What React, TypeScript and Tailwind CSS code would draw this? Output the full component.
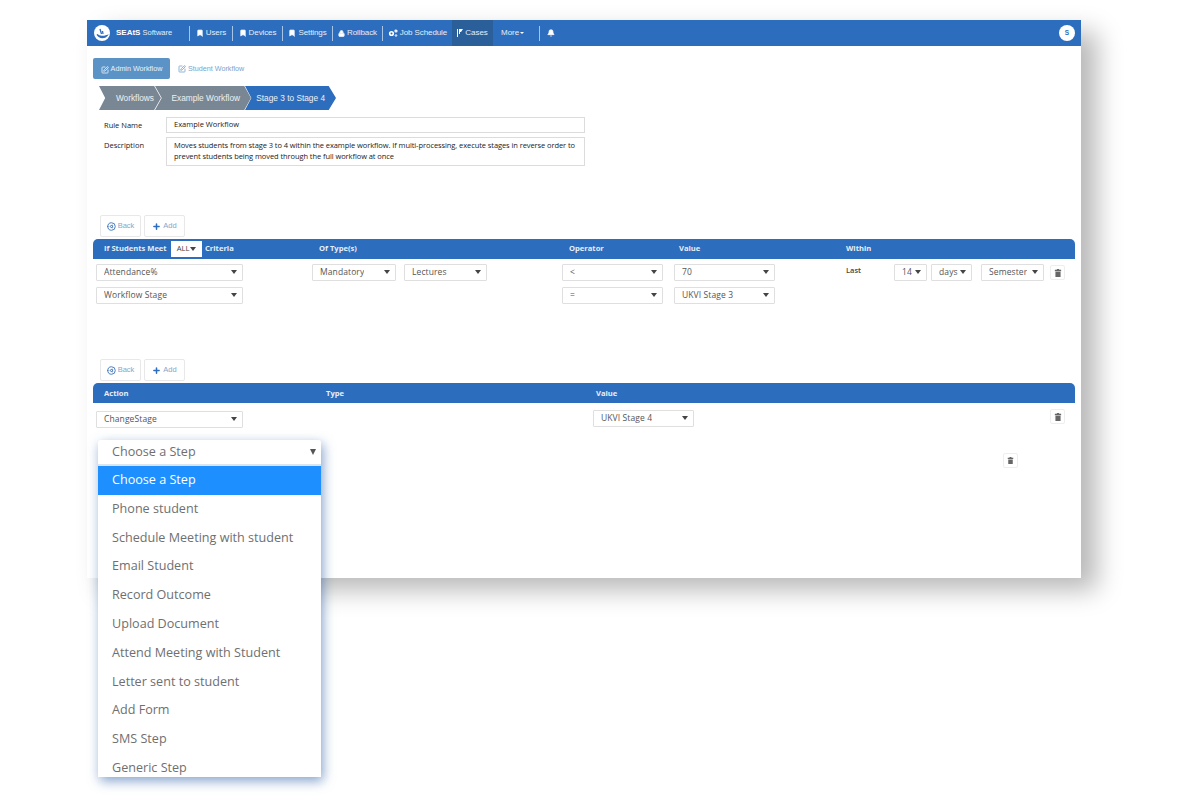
import { Bell, Bookmark, CirclePlay, Lock, Plus, SquarePen } from "lucide-react";

const navItems = [
  { label: "Users", icon: "book", w: "w-[43px]" },
  { label: "Devices", icon: "book", w: "w-[50px]" },
  { label: "Settings", icon: "book", w: "w-[50px]" },
  { label: "Rollback", icon: "lock", w: "w-[50px]" },
  { label: "Job Schedule", icon: "cog", w: "w-[70px]" },
];

const steps = [
  "Choose a Step",
  "Phone student",
  "Schedule Meeting with student",
  "Email Student",
  "Record Outcome",
  "Upload Document",
  "Attend Meeting with Student",
  "Letter sent to student",
  "Add Form",
  "SMS Step",
  "Generic Step",
];

const NavIcon = ({ name }: { name: string }) => {
  if (name === "lock") return <Lock size={7} fill="white" strokeWidth={3} className="shrink-0" />;
  if (name === "cog")
    return (
      <svg width="10" height="8" viewBox="0 0 10 8" className="shrink-0" fill="none" stroke="white">
        <circle cx="3.5" cy="4.5" r="1.8" strokeWidth="1.6" />
        <circle cx="8" cy="2" r="1" strokeWidth="1.2" />
        <circle cx="8" cy="6.5" r="0.8" strokeWidth="1" />
      </svg>
    );
  return <Bookmark size={8} fill="white" strokeWidth={2} className="shrink-0" />;
};

const Trash = ({ size = 8 }: { size?: number }) => (
  <svg width={size} height={size} viewBox="0 0 12 14" fill="#666">
    <path d="M4 0h4v1.5h3.5V4H.5V1.5H4zM1.5 5h9v9h-9z" />
  </svg>
);

const Caret = () => <span className="h-0 w-0 shrink-0 border-x-[3px] border-t-[4px] border-x-transparent border-t-[#444]" />;

const Select = ({ label, className }: { label: string; className: string }) => (
  <div className={`flex h-[17px] items-center justify-between rounded-[1px] border border-[#dfdfdf] bg-white pb-[1px] pl-[7px] pr-[5px] text-[8.5px] tracking-[0.1px] text-[#555] ${className}`}>
    <span className="truncate">{label}</span>
    <Caret />
  </div>
);

const TrashButton = ({ className = "", size = 8 }: { className?: string; size?: number }) => (
  <div className={`flex h-[15px] w-[15px] items-center justify-center rounded-[2px] border border-[#eeeeee] bg-white ${className}`}>
    <Trash size={size} />
  </div>
);

const BackAdd = () => (
  <div className="flex gap-[3px] pl-[13px] font-['Liberation_Sans',sans-serif] text-[7.5px] text-[#86a6cb]">
    <div className="flex h-[22px] w-[41px] items-center justify-center gap-[2px] rounded-[2px] border border-[#e8e8e8]">
      <CirclePlay size={9} strokeWidth={2.5} className="rotate-180 text-[#3f78b8]" />
      Back
    </div>
    <div className="flex h-[22px] w-[41px] items-center justify-center gap-[2px] rounded-[2px] border border-[#e8e8e8]">
      <Plus size={9} strokeWidth={4} className="text-[#2d6dbd]" />
      Add
    </div>
  </div>
);

export default function App() {
  return (
    <div className="h-[800px] w-[1200px] overflow-hidden bg-white pl-[87px] pt-[20px] font-['Liberation_Sans',sans-serif]">
      <div className="relative h-[558px] w-[994px] bg-white shadow-[16px_12px_24px_rgba(0,0,0,0.28)]">
        {/* top bar */}
        <div className="flex h-[26px] items-center bg-[#2d6dbd] pl-[7px] pr-[6px] text-[8px] text-[#e6eef8]">
          <svg width="16" height="16" viewBox="0 0 16 16" className="shrink-0">
            <circle cx="8" cy="8" r="8" fill="white" />
            <path d="M3 9.5c2 2.5 5 2.5 10 1-2 2.5-7 3.5-10-1zM6 4l1.5 5M8.5 6l.5 3" stroke="#2d6dbd" strokeWidth="1.3" fill="#2d6dbd" />
          </svg>
          <span className="ml-[6px] w-[73px] shrink-0 whitespace-nowrap text-[7.5px]">
            <b className="text-[8px] text-white">SEAtS</b> Software
          </span>
          {navItems.map((item) => (
            <div key={item.label} className={`flex h-[15px] ${item.w} shrink-0 items-center justify-center gap-[2px] border-l border-[#a9c5e6] whitespace-nowrap tracking-[-0.1px]`}>
              <NavIcon name={item.icon} />
              {item.label}
            </div>
          ))}
          <div className="flex h-[26px] w-[41px] shrink-0 items-center justify-center gap-[2px] bg-[#2b5f9a]">
            <svg width="6" height="8" viewBox="0 0 6 8" fill="white" className="shrink-0">
              <path d="M0 0h1v8H0zM2 0h4L5 1.5 4 3H3v2H2z" />
            </svg>
            Cases
          </div>
          <div className="flex w-[46px] shrink-0 items-center gap-[1px] pl-[8px]">
            More
            <span className="h-0 w-0 border-x-[2px] border-t-[2px] border-x-transparent border-t-white" />
          </div>
          <div className="flex h-[15px] items-center border-l border-[#a9c5e6] pl-[7px]">
            <Bell size={8} fill="white" className="text-white" />
          </div>
          <div className="ml-auto flex h-[16px] w-[16px] items-center justify-center rounded-full bg-white text-[6.5px] font-bold text-[#2d6dbd]">S</div>
        </div>

        {/* workflow tabs */}
        <div className="mt-[12px] flex items-center pl-[6px] text-[7.2px]">
          <div className="flex h-[21px] w-[77px] items-center justify-center gap-[2px] rounded-[2px] bg-[#5b93c7] pt-[2px] text-[#eaf1f8]">
            <SquarePen size={8} strokeWidth={2.5} />
            Admin Workflow
          </div>
          <div className="ml-[8px] flex items-center gap-[2px] pt-[2px] text-[#7ba3cc]">
            <SquarePen size={8} strokeWidth={2.5} />
            Student Workflow
          </div>
        </div>

        {/* breadcrumb */}
        <div className="mt-[7px] flex pl-[12px] text-[8.3px] text-[#eef1f4]">
          <div className="flex h-[24px] w-[62px] items-center justify-end bg-[#788793] pr-[7px] [clip-path:polygon(0_0,89%_0,100%_50%,89%_100%,0_100%,10%_50%)]">Workflows</div>
          <div className="-ml-[6px] flex h-[24px] w-[96px] items-center justify-end bg-[#788793] pr-[11px] [clip-path:polygon(0_0,93%_0,100%_50%,93%_100%,0_100%,7%_50%)]">Example Workflow</div>
          <div className="-ml-[6px] flex h-[24px] w-[91px] items-center justify-end bg-[#2d6dbd] pr-[11px] [clip-path:polygon(0_0,92%_0,100%_50%,92%_100%,0_100%,7%_50%)]">Stage 3 to Stage 4</div>
        </div>

        {/* rule form */}
        <div className="mt-[7px] font-['Open_Sans',sans-serif] text-[7.5px] text-[#222]">
          <div className="flex items-center pl-[17px]">
            <span className="mt-[1px] w-[62px]">Rule Name</span>
            <div className="flex h-[16px] w-[419px] items-center border border-[#dcdcdc] pl-[7px]">Example Workflow</div>
          </div>
          <div className="mt-[4px] flex pl-[17px]">
            <span className="w-[62px] pt-[3px]">Description</span>
            <div className="h-[29px] w-[419px] border border-[#dcdcdc] px-[7px] pt-[2px] text-[7.5px] leading-[10.5px] tracking-[-0.08px]">
              Moves students from stage 3 to 4 within the example workflow. If multi-processing, execute stages in reverse order to prevent students being moved through the full workflow at once
            </div>
          </div>
        </div>

        {/* criteria */}
        <div className="mt-[49px] font-['Open_Sans',sans-serif]">
          <BackAdd />
          <div className="ml-[6px] mt-[2px] flex h-[20px] w-[982px] items-center rounded-t-[5px] bg-[#2d6dbd] text-[7.6px] font-bold text-[#e6eef8]">
            <span className="ml-[11px] w-[66px] whitespace-nowrap">If Students Meet</span>
            <div className="ml-[1px] flex h-[16px] w-[31px] items-center justify-center gap-[1px] bg-white font-normal text-[#444]">
              ALL
              <Caret />
            </div>
            <span className="ml-[3px] w-[114px]">Criteria</span>
            <span className="w-[250px]">Of Type(s)</span>
            <span className="w-[110px]">Operator</span>
            <span className="w-[167px]">Value</span>
            <span>Within</span>
          </div>
          <div className="mt-[5px] flex items-start pl-[9px]">
            <Select label="Attendance%" className="w-[147px]" />
            <Select label="Mandatory" className="ml-[69px] w-[84px]" />
            <Select label="Lectures" className="ml-[8px] w-[83px]" />
            <Select label="<" className="ml-[75px] w-[101px]" />
            <Select label="70" className="ml-[11px] w-[101px]" />
            <span className="ml-[71px] mt-[1px] text-[7.5px] font-semibold text-[#444]">Last</span>
            <Select label="14" className="ml-[33px] w-[33px]" />
            <Select label="days" className="ml-[4px] w-[41px]" />
            <Select label="Semester" className="ml-[9px] w-[63px]" />
            <TrashButton className="ml-[6px] mt-[1px]" />
          </div>
          <div className="mt-[6px] flex pl-[9px]">
            <Select label="Workflow Stage" className="w-[147px]" />
            <Select label="=" className="ml-[319px] w-[101px]" />
            <Select label="UKVI Stage 3" className="ml-[11px] w-[101px]" />
          </div>
        </div>

        {/* actions */}
        <div className="mt-[55px] font-['Open_Sans',sans-serif]">
          <BackAdd />
          <div className="ml-[6px] mt-[2px] flex h-[20px] w-[982px] items-center rounded-t-[5px] bg-[#2d6dbd] pt-[2px] text-[7.6px] font-bold text-[#e6eef8]">
            <span className="ml-[11px] w-[222px]">Action</span>
            <span className="w-[270px]">Type</span>
            <span>Value</span>
          </div>
          <div className="mt-[7px] flex items-start pl-[9px]">
            <Select label="ChangeStage" className="mt-[1px] w-[147px]" />
            <Select label="UKVI Stage 4" className="ml-[350px] w-[101px]" />
            <TrashButton className="-mt-[1px] ml-[356px]" />
          </div>
        </div>

        <TrashButton size={7} className="absolute left-[916px] top-[433px] h-[14px] w-[13px]" />

        {/* step dropdown, hangs out of the window */}
        <div className="absolute left-[11px] top-[420px] h-[337px] w-[223px] overflow-hidden rounded-t-[2px] bg-[#dbe5f1] font-['Open_Sans',sans-serif] text-[12.6px] text-[#6f6f6f] shadow-[2px_4px_12px_rgba(50,100,170,0.6)]">
          <div className="flex h-[24px] items-center justify-between bg-white pl-[14px] pr-[5px]">
            Choose a Step
            <span className="h-0 w-0 border-x-[3px] border-t-[6px] border-x-transparent border-t-[#555]" />
          </div>
          <div className="mt-[2px] bg-white">
            {steps.map((s, i) => (
              <div key={s} className={`flex h-[28.8px] items-center whitespace-nowrap pl-[14px] ${i === 0 ? "bg-[#1e8fff] text-white" : ""}`}>
                {s}
              </div>
            ))}
          </div>
        </div>
      </div>
    </div>
  );
}
